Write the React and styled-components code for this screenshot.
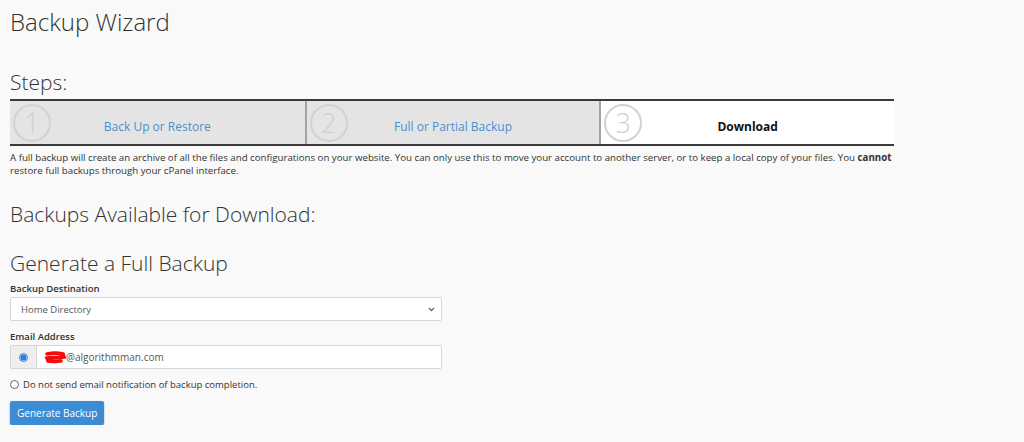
import React from 'react'
import styled, { createGlobalStyle } from 'styled-components'

const GlobalStyle = createGlobalStyle`
  html, body {
    margin: 0;
    padding: 0;
    background: #f9f9f9;
    font-family: "Open Sans", "Noto Sans", sans-serif;
    color: #333;
  }
`

const Page = styled.div`
  padding: 4px 10px 0 10px;
  width: 884px;
`

const Title = styled.h1`
  margin: 0;
  font-size: 24px;
  font-weight: 300;
  line-height: 36px;
  color: #333;
`

const Heading = styled.h2`
  margin: ${p => p.$top || 0}px 0 ${p => p.$bottom || 0}px 0;
  font-size: ${p => p.$size || 21}px;
  font-weight: 300;
  line-height: 28px;
  color: #333;
`

const StepBar = styled.div`
  display: grid;
  grid-template-columns: repeat(3, 1fr);
  border-top: 2px solid #3a3a3a;
  border-bottom: 2px solid #3a3a3a;
  margin-top: 3px;
`

const Step = styled.div`
  display: grid;
  grid-template-columns: 1fr;
  align-items: center;
  height: 43px;
  background: ${p => (p.$current ? '#ffffff' : '#e4e4e4')};
  border-left: ${p => (p.$first ? 'none' : '2px solid #a3a3a3')};
`

const StepNumber = styled.div`
  grid-area: 1 / 1;
  justify-self: start;
  margin-left: 3px;
  width: 34px;
  height: 34px;
  border: 2px solid #d2d2d2;
  border-radius: 50%;
  display: flex;
  align-items: center;
  justify-content: center;
  font-size: 27px;
  font-weight: 300;
  color: #d0d0d0;
  line-height: 1;
`

const StepLabel = styled.a`
  grid-area: 1 / 1;
  justify-self: center;
  padding-top: 7px;
  font-size: 12px;
  font-weight: ${p => (p.$current ? 700 : 400)};
  color: ${p => (p.$current ? '#111' : '#4a8fd0')};
  text-decoration: none;
  cursor: pointer;
`

const Intro = styled.p`
  margin: 5px 0 0 0;
  font-size: 9.7px;
  line-height: 13px;
  color: #333;
  width: 884px;
`

const Label = styled.label`
  display: block;
  font-size: 9.5px;
  font-weight: 600;
  color: #333;
  margin: ${p => p.$top || 0}px 0 2px 0;
`

const Select = styled.div`
  width: 432px;
  height: 24px;
  box-sizing: border-box;
  border: 1px solid #d6d6d6;
  border-radius: 2px;
  background: #fff;
  display: flex;
  align-items: center;
  justify-content: space-between;
  padding: 0 6px 0 10px;
  font-size: 9.5px;
  color: #555;
`

const InputGroup = styled.div`
  width: 432px;
  height: 24px;
  box-sizing: border-box;
  display: flex;
  border: 1px solid #d6d6d6;
  border-radius: 2px;
  background: #fff;
`

const Addon = styled.div`
  width: 25px;
  display: flex;
  align-items: center;
  justify-content: center;
  background: #eeeeee;
  border-right: 1px solid #d6d6d6;
`

const InputField = styled.div`
  flex: 1;
  display: flex;
  align-items: center;
  padding-left: 7px;
  font-size: 10px;
  color: #555;
`

const Radio = styled.span`
  width: 9px;
  height: 9px;
  border-radius: 50%;
  box-sizing: border-box;
  border: ${p => (p.$checked ? '1px solid #2d79e0' : '1px solid #666')};
  background: ${p => (p.$checked ? 'radial-gradient(circle, #2d79e0 0 2.8px, #fff 3.3px)' : '#fff')};
  display: inline-block;
  flex-shrink: 0;
`

const RadioRow = styled.div`
  display: flex;
  align-items: center;
  gap: 4px;
  margin-top: 9px;
  font-size: 9.5px;
  color: #333;
`

const Button = styled.button`
  margin-top: 10px;
  height: 24px;
  padding: 0 7px;
  border: none;
  border-radius: 2px;
  background: #3c8bd5;
  color: #fff;
  font-family: "Open Sans", sans-serif;
  font-size: 10px;
  box-shadow: 0 1px 2px rgba(0, 0, 0, 0.35);
  cursor: pointer;
`

const steps = [
  { n: 1, label: 'Back Up or Restore' },
  { n: 2, label: 'Full or Partial Backup' },
  { n: 3, label: 'Download', current: true },
]

function Redaction() {
  return (
    <svg width="22" height="13" viewBox="0 0 22 13">
      <path d="M3 3 C8 2 15 2 19 3 L20 6 C15 7 8 6 3 7 L4 10 C9 11 14 10 17 10" fill="none" stroke="#f20d0d" strokeWidth="3.6" strokeLinecap="round" />
    </svg>
  )
}

function Chevron() {
  return (
    <svg width="7" height="5" viewBox="0 0 7 5">
      <path d="M1 1 L3.5 3.5 L6 1" fill="none" stroke="#666" strokeWidth="1.3" />
    </svg>
  )
}

export default function App() {
  return (
    <>
      <GlobalStyle />
      <Page>
        <Title>Backup Wizard</Title>
        <Heading $top={28}>Steps:</Heading>
        <StepBar>
          {steps.map((s, i) => (
            <Step key={s.n} $current={s.current} $first={i === 0}>
              <StepNumber>{s.n}</StepNumber>
              <StepLabel $current={s.current}>{s.label}</StepLabel>
            </Step>
          ))}
        </StepBar>
        <Intro>
          A full backup will create an archive of all the files and configurations on your website. You can only use this to move your account to another server, or to keep a local copy of your files. You <b>cannot</b> restore full backups through your cPanel interface.
        </Intro>
        <Heading $top={23}>Backups Available for Download:</Heading>
        <Heading $top={21}>Generate a Full Backup</Heading>
        <Label $top={5}>Backup Destination</Label>
        <Select>
          <span>Home Directory</span>
          <Chevron />
        </Select>
        <Label $top={9}>Email Address</Label>
        <InputGroup>
          <Addon>
            <Radio $checked />
          </Addon>
          <InputField>
            <Redaction />
            @algorithmman.com
          </InputField>
        </InputGroup>
        <RadioRow>
          <Radio />
          Do not send email notification of backup completion.
        </RadioRow>
        <Button>Generate Backup</Button>
      </Page>
    </>
  )
}
